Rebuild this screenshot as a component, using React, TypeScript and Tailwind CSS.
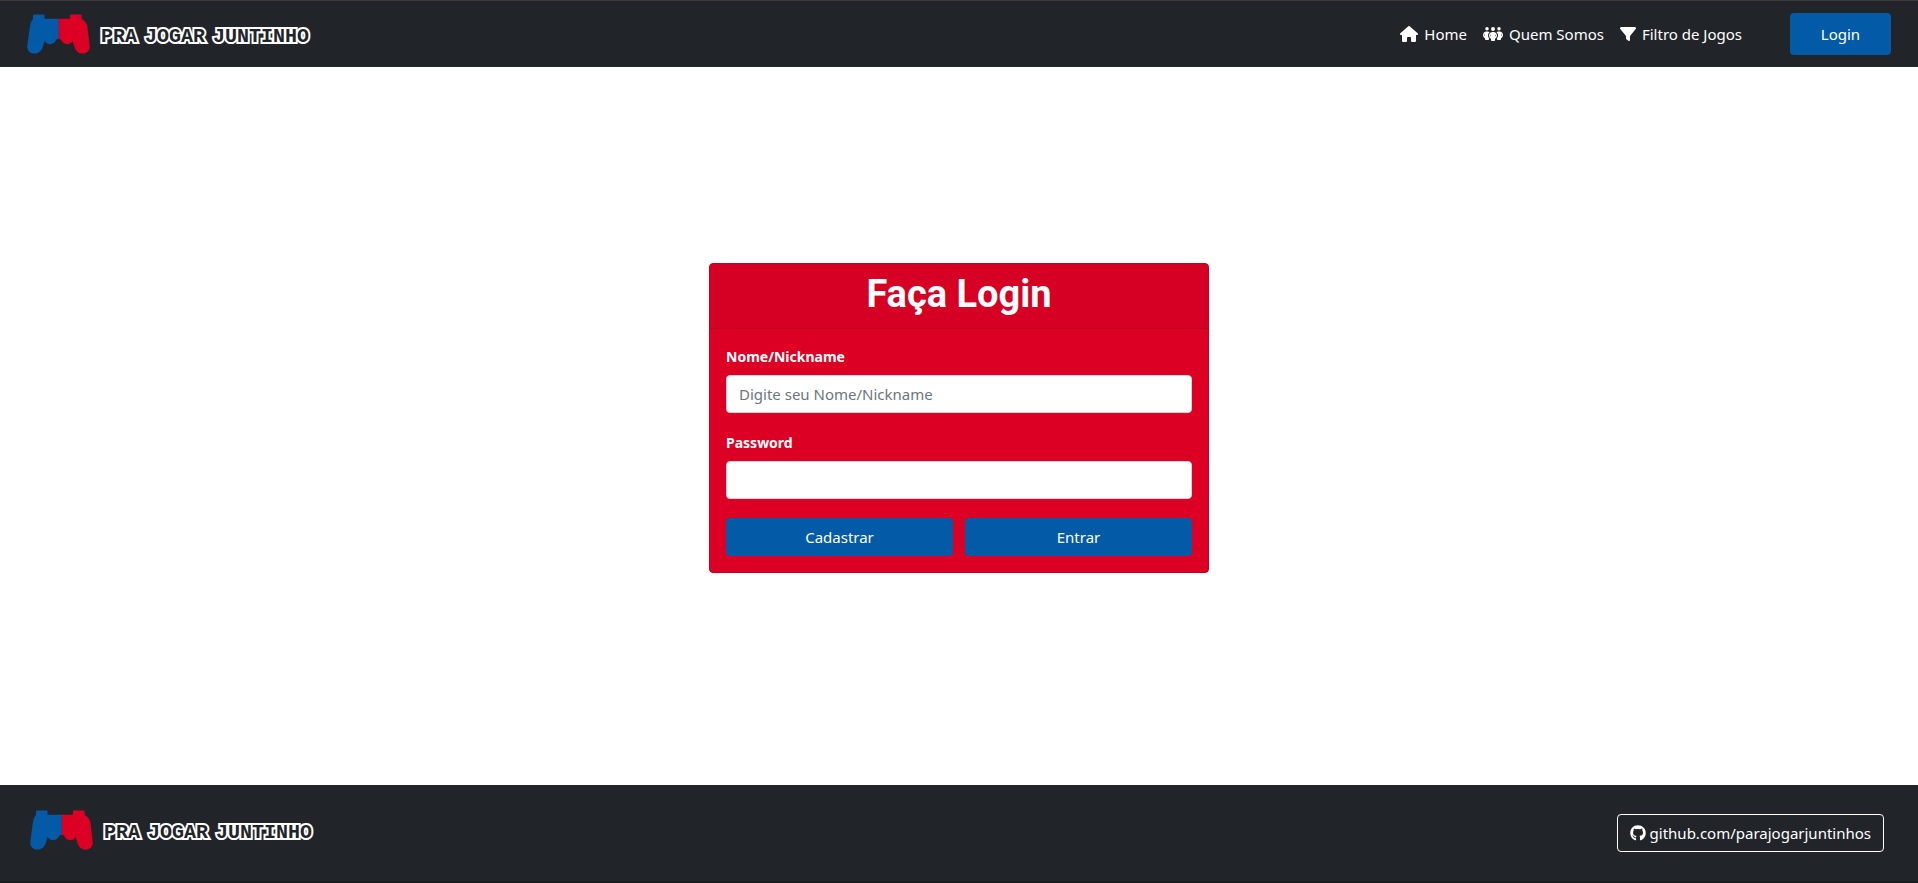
import React from "react";
import { FaFilter, FaGithub, FaHouse, FaPeopleGroup } from "react-icons/fa6";

function Controller() {
  return (
    <svg viewBox="23 27 188 119" className="h-10 w-[63px]" aria-hidden="true">
      <path
        d="M118 41H75V31Q75 28 72 28H44Q41 28 41 31V41Q34 49 32 62L24 120C22 136 32 145 44 145C58 145 66 137 70 126L76 107C79 114 84 117 92 117C101 117 107 112 110 104Q113 102 118 101Z"
        fill="#035aa6"
      />
      <path
        d="M118 41H151V31Q151 28 154 28H183Q186 28 186 31V41Q199 49 203 62L210 120C212 136 202 145 190 145C176 145 169 137 165 126L159 107C156 114 151 117 143 117C134 117 128 112 125 104Q122 102 118 101Z"
        fill="#dc0024"
      />
    </svg>
  );
}

function Brand() {
  return (
    <a href="#" className="flex items-center gap-[11px]">
      <Controller />
      <span className="flex gap-2 pt-1.5 font-['Liberation_Mono',monospace] text-xl leading-6 font-bold text-[#212529] [-webkit-text-stroke:4px_#fff] [paint-order:stroke_fill] [text-shadow:0_1px_0_#fff,0_2px_0_#fff]">
        <span>PRA</span>
        <span>JOGAR</span>
        <span>JUNTINHO</span>
      </span>
    </a>
  );
}

function NavLink({ icon, children }: { icon: React.ReactNode; children: React.ReactNode }) {
  return (
    <a href="#" className="flex items-center gap-1.5">
      {icon}
      {children}
    </a>
  );
}

function Field({ id, label, type, placeholder }: { id: string; label: string; type: string; placeholder?: string }) {
  return (
    <div>
      <label htmlFor={id} className="mb-2 block text-sm leading-[21px] font-bold">
        {label}
      </label>
      <input
        id={id}
        type={type}
        placeholder={placeholder}
        className="block h-[38px] w-full rounded border border-[#ced4da] bg-white px-3 text-[#212529] placeholder:text-[#6c757d]"
      />
    </div>
  );
}

export default function App() {
  return (
    <div className="flex min-h-screen flex-col bg-white font-['Noto_Sans',sans-serif] text-[15px] leading-6 text-white">
      <header className="flex h-[67px] items-center justify-between border-t border-[#3b3b3b] bg-[#212529] px-[27px]">
        <Brand />
        <div className="flex items-center gap-12">
          <nav className="flex items-center gap-4">
            <NavLink icon={<FaHouse className="h-4 w-[18px]" />}>Home</NavLink>
            <NavLink icon={<FaPeopleGroup className="h-4 w-5" />}>Quem Somos</NavLink>
            <NavLink icon={<FaFilter className="size-4" />}>Filtro de Jogos</NavLink>
          </nav>
          <button className="h-[42px] w-[101px] rounded bg-[#035aa6]">Login</button>
        </div>
      </header>

      <main className="flex grow items-center justify-center">
        <section className="mb-4 w-full max-w-[500px] rounded border border-[#be0324] bg-[#dc0024]">
          <h1 className="flex h-[65px] items-center justify-center rounded-t-[3px] border-b border-[#be0320] bg-[#d50023] pb-1 font-['Roboto',sans-serif] text-[38px] leading-none font-bold">
            Faça Login
          </h1>
          <form className="flex flex-col gap-[19px] px-4 pt-[17px] pb-4">
            <Field id="nickname" label="Nome/Nickname" type="text" placeholder="Digite seu Nome/Nickname" />
            <Field id="password" label="Password" type="password" />
            <div className="grid grid-cols-2 gap-3">
              <button type="button" className="h-[38px] rounded bg-[#035aa6]">
                Cadastrar
              </button>
              <button type="button" className="h-[38px] rounded bg-[#035aa6]">
                Entrar
              </button>
            </div>
          </form>
        </section>
      </main>

      <footer className="flex h-[98px] items-center justify-between border-b-2 border-[#1a1d20] bg-[#212529] pr-[34px] pl-[30px]">
        <div className="pb-1.5">
          <Brand />
        </div>
        <a href="#" className="flex h-[38px] items-center gap-1 rounded border border-white px-3">
          <FaGithub className="size-4" />
          github.com/parajogarjuntinhos
        </a>
      </footer>
    </div>
  );
}
